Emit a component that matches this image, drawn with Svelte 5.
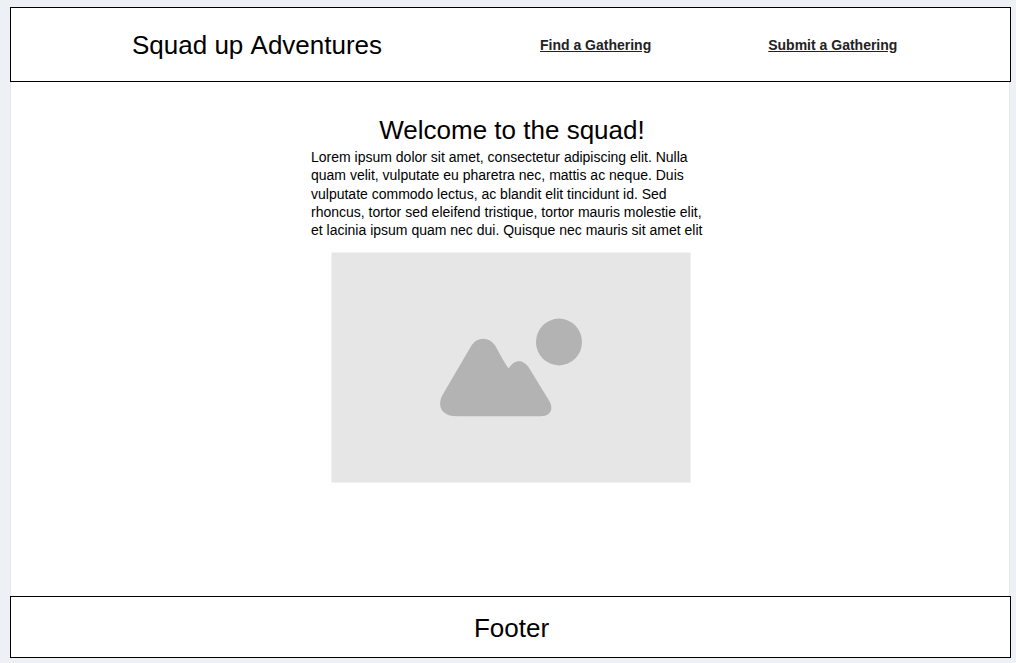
<script>
  const lines = [
    'Lorem ipsum dolor sit amet, consectetur adipiscing elit. Nulla',
    'quam velit, vulputate eu pharetra nec, mattis ac neque. Duis',
    'vulputate commodo lectus, ac blandit elit tincidunt id. Sed',
    'rhoncus, tortor sed eleifend tristique, tortor mauris molestie elit,',
    'et lacinia ipsum quam nec dui. Quisque nec mauris sit amet elit'
  ];
</script>

<div class="page">
  <header>
    <h1>Squad up Adventures</h1>
    <nav>
      <a href="#find">Find a Gathering</a>
      <a href="#submit">Submit a Gathering</a>
    </nav>
  </header>
  <main>
    <h2>Welcome to the squad!</h2>
    <p>
      {#each lines as line}<span>{line}</span>{/each}
    </p>
    <svg class="picture" width="360" height="231" viewBox="331 252 360 231" aria-hidden="true">
      <rect x="331.5" y="252.5" width="359" height="230" fill="#e6e6e6" />
      <path
        fill="#b3b3b3"
        d="M470.6 347C476.5 336 490 336 496 347C500.5 355.500 504 362 508.500 368.500C514 359.500 522.500 358.500 528.500 367L549 400.500C554.500 409.500 550 416.300 540.500 416.300H457C442 416.300 436.500 406.500 442.500 395Z"
      />
      <ellipse cx="559" cy="342" rx="23" ry="23.400" fill="#b3b3b3" />
    </svg>
  </main>
  <footer>Footer</footer>
</div>

<style>
  :global(body) {
    background: #edf1f6;
  }
  .page {
    box-sizing: border-box;
    height: 663px;
    padding: 7px 5px 5px 10px;
    display: flex;
    flex-direction: column;
    font-family: "Liberation Sans", Arial, sans-serif;
    color: #000;
    overflow: hidden;
  }
  header,
  footer {
    box-sizing: border-box;
    border: 1px solid #000;
    background: #fff;
    display: flex;
    align-items: center;
  }
  header {
    height: 75px;
    padding-left: 121px;
  }
  h1,
  h2 {
    margin: 0;
    font-size: 26px;
    line-height: 30px;
    font-weight: 400;
    white-space: nowrap;
  }
  h1 {
    width: 408px;
    font-kerning: none;
  }
  nav {
    display: flex;
    gap: 117px;
    white-space: nowrap;
  }
  a {
    color: #222;
    font-size: 14px;
    line-height: 16px;
    font-weight: 700;
    text-decoration: underline;
  }
  main {
    flex: 1;
    box-sizing: border-box;
    width: 1000px;
    padding-top: 33px;
    background: #fff;
    border: solid #e4e8ed;
    border-width: 0 1px;
    display: flex;
    flex-direction: column;
    align-items: center;
  }
  h2 {
    padding-left: 4px;
  }
  p {
    margin: 3px 0 0;
    width: 400px;
    padding-left: 2px;
    font-size: 14px;
    line-height: 18.250px;
  }
  span {
    display: block;
    white-space: nowrap;
  }
  .picture {
    margin-top: 13px;
    margin-left: 2px;
  }
  footer {
    height: 62px;
    justify-content: center;
    padding: 2px 0 0 2px;
    font-size: 26px;
  }
</style>
